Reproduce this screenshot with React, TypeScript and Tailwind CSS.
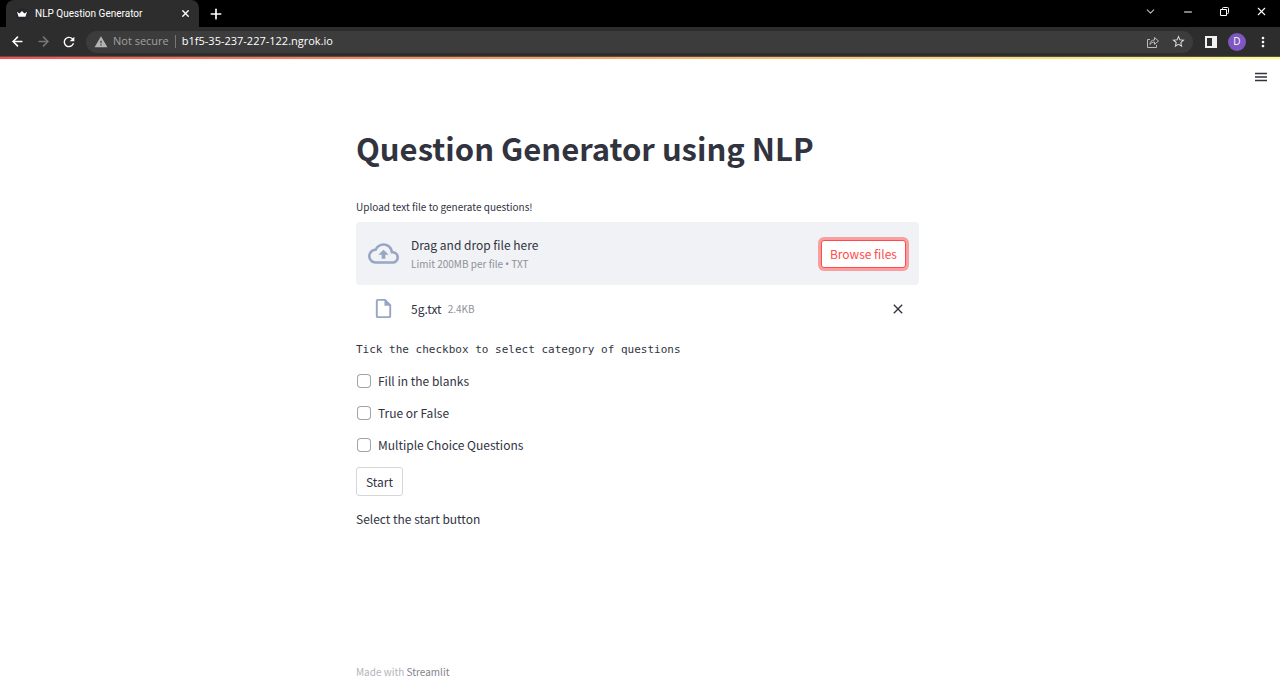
import { useState, type ReactNode } from "react";
import { ArrowLeft, ArrowRight, ChevronDown, Minus, Plus, X } from "lucide-react";
import { MdClose, MdMoreVert, MdOutlineCloudUpload, MdRefresh, MdStarOutline, MdWarning } from "react-icons/md";

const categories = ["Fill in the blanks", "True or False", "Multiple Choice Questions"];

function IconButton({ label, className = "", children }: { label: string; className?: string; children: ReactNode }) {
  return (
    <button type="button" aria-label={label} className={`flex shrink-0 items-center justify-center ${className}`}>
      {children}
    </button>
  );
}

function TabStrip() {
  return (
    <div className="flex h-[27px] bg-black text-white">
      <div className="ml-[6px] flex w-[193px] items-center rounded-t-lg bg-[#2d2d2d] pl-[10px] pr-[8px]">
        <svg width="12" height="12" viewBox="0 0 12 12" className="shrink-0">
          <circle cx="6" cy="6" r="6" fill="#262730" />
          <path d="M1 3.800 3.500 5.600 6 3l2.500 2.600L11 3.800 9.500 8.800h-7z" fill="#fff" />
        </svg>
        <span className="ml-[7px] flex-1 whitespace-nowrap font-['Roboto',sans-serif] text-[10px]">
          NLP Question Generator
        </span>
        <IconButton label="Close tab">
          <X size={11} strokeWidth={3} />
        </IconButton>
      </div>
      <IconButton label="New tab" className="ml-[9px]">
        <Plus size={16} strokeWidth={2.500} />
      </IconButton>
      <div className="ml-auto flex items-center pb-[4px]">
        <IconButton label="Search tabs" className="w-[37px] text-[#bbb]">
          <ChevronDown size={13} strokeWidth={2} />
        </IconButton>
        <IconButton label="Minimize" className="w-[37px]">
          <Minus size={12} strokeWidth={2} />
        </IconButton>
        <IconButton label="Restore" className="w-[37px]">
          <svg width="9" height="9" viewBox="0 0 9 9" fill="none" stroke="currentColor">
            <path d="M.5 2.500h6v6h-6zM2.500 2.500v-1q0-1 1-1h4q1 0 1 1v4q0 1-1 1h-1" />
          </svg>
        </IconButton>
        <IconButton label="Close window" className="w-[37px]">
          <X size={13} strokeWidth={2} />
        </IconButton>
      </div>
    </div>
  );
}

function Toolbar() {
  return (
    <div className="flex h-[30px] items-center border-b border-[#505050] bg-[#2d2d2d] pl-[10px] pr-[9px] text-white">
      <IconButton label="Back">
        <ArrowLeft size={15} strokeWidth={2.500} />
      </IconButton>
      <IconButton label="Forward" className="ml-[11px] text-[#777]">
        <ArrowRight size={15} strokeWidth={2.500} />
      </IconButton>
      <IconButton label="Reload" className="ml-[10px]">
        <MdRefresh size={16} />
      </IconButton>
      <div className="ml-[9px] flex h-[22px] flex-1 items-center rounded-full bg-[#3c3c3c] pl-[8px] pr-[7px]">
        <MdWarning size={14} className="shrink-0 text-[#b4b4b4]" />
        <span className="ml-[5px] whitespace-nowrap text-[11px] text-[#a0a0a0]">Not secure</span>
        <span className="ml-[6px] h-[13px] w-px bg-[#777]" />
        <input
          aria-label="Address"
          defaultValue="b1f5-35-237-227-122.ngrok.io"
          className="ml-[6px] min-w-0 flex-1 bg-transparent text-[11px] outline-none"
        />
        <IconButton label="Share this page" className="text-[#bbb]">
          <svg width="12" height="12" viewBox="0 0 12 12" fill="none" stroke="currentColor">
            <path d="M3 3.500H.500v8h9V9" />
            <path d="M3 8.500c0-3 1.500-4.500 4.500-4.500V1.500L11.500 5 7.500 8.500V6C5.500 6 4 6.800 3 8.500z" strokeLinejoin="round" />
          </svg>
        </IconButton>
        <IconButton label="Bookmark this page" className="ml-[12px] text-[#ddd]">
          <MdStarOutline size={15} />
        </IconButton>
      </div>
      <IconButton label="Side panel" className="ml-[12px]">
        <svg width="12" height="12" viewBox="0 0 12 12">
          <path d="M0 0h12v12H0zM2 2v8h5V2z" fill="#f1f1f1" fillRule="evenodd" />
        </svg>
      </IconButton>
      <button type="button" aria-label="Profile" className="ml-[11px] size-[18px] rounded-full bg-[#7e57c2] text-[10px]">
        D
      </button>
      <IconButton label="Menu" className="ml-[9px]">
        <MdMoreVert size={16} />
      </IconButton>
    </div>
  );
}

function FileUploader() {
  const [hasFile, setHasFile] = useState(true);

  return (
    <section>
      <p className="text-[10px] leading-[18px]">Upload text file to generate questions!</p>
      <div className="mt-[6px] flex items-center rounded bg-[#f0f2f6] py-[13px] pl-[12px] pr-[13px]">
        <MdOutlineCloudUpload size={31} className="shrink-0 text-[#97a6c3]" />
        <div className="ml-[12px] flex-1">
          <p className="text-[12px] leading-[20px]">Drag and drop file here</p>
          <p className="text-[10px] leading-[17px] text-[#8f9197]">
            Limit 200MB per file <span className="font-['Noto_Sans',sans-serif] leading-none">•</span> TXT
          </p>
        </div>
        <button
          type="button"
          className="h-[28px] rounded-[3px] border border-[#ff4b4b] bg-white px-[8px] text-[12px] leading-[20px] text-[#ff4b4b] shadow-[0_0_0_3px_rgba(255,75,75,0.5)]"
        >
          Browse files
        </button>
      </div>
      {hasFile && (
        <div className="flex h-[47px] items-center pl-[16px] pr-[13px]">
          <svg width="23" height="23" viewBox="0 0 24 24" className="shrink-0">
            <path
              d="M6 2h8l6 6v12q0 2-2 2H6q-2 0-2-2V4q0-2 2-2zM6 4v16h12V9h-5V4z"
              fill="#97a6c3"
              fillRule="evenodd"
            />
          </svg>
          <span className="ml-[16px] text-[12px]">5g.txt</span>
          <span className="ml-[6px] flex-1 text-[10px] text-[#8f9197]">2.4KB</span>
          <button type="button" aria-label="Remove file" onClick={() => setHasFile(false)}>
            <MdClose size={16} />
          </button>
        </div>
      )}
    </section>
  );
}

export default function App() {
  return (
    <div className="flex min-h-screen flex-col bg-white font-['Noto_Sans_CJK_SC',sans-serif] text-[#31333f]">
      <header className="font-['Open_Sans',sans-serif]">
        <TabStrip />
        <Toolbar />
        <div className="h-[2px] bg-linear-to-r from-[#ff4b4b] to-[#fffd80]" />
      </header>

      <div className="flex h-[36px] items-center justify-end pr-[12px]">
        <IconButton label="Main menu">
          <svg width="14" height="10" viewBox="0 0 14 10" fill="none" stroke="currentColor" strokeWidth="1.500">
            <path d="M1 1.500h12M1 5h12M1 8.500h12" />
          </svg>
        </IconButton>
      </div>

      <div className="flex flex-1 flex-col pr-[5px]">
        <main className="mx-auto w-full max-w-[563px] flex-1 pt-[32px]">
          <h1 className="text-[31px] leading-[42px] font-bold">Question Generator using NLP</h1>
          <div className="mt-[29px]">
            <FileUploader />
          </div>
          <p className="mt-[9px] font-['DejaVu_Sans_Mono',monospace] text-[11px] leading-[18px]">
            Tick the checkbox to select category of questions
          </p>
          <div className="mt-[12px] flex flex-col items-start gap-[12px]">
            {categories.map((category) => (
              <label key={category} className="flex items-center gap-[8px] pl-[2px] text-[12px] leading-[20px]">
                <input
                  type="checkbox"
                  className="size-[12px] appearance-none rounded-[3px] bg-white ring-1 ring-[#a3a4ab] checked:bg-[#ff4b4b]"
                />
                {category}
              </label>
            ))}
          </div>
          <button
            type="button"
            className="mt-[12px] block h-[29px] rounded-[3px] border border-[#d6d6d9] px-[9px] text-[12px] leading-[20px]"
          >
            Start
          </button>
          <p className="mt-[13px] text-[12px] leading-[20px]">Select the start button</p>
        </main>
        <footer className="mx-auto w-full max-w-[563px] text-[10px] leading-[16px] text-[#b3b4ba]">
          Made with{" "}
          <a href="#" className="text-[#83848c]">
            Streamlit
          </a>
        </footer>
      </div>
    </div>
  );
}
